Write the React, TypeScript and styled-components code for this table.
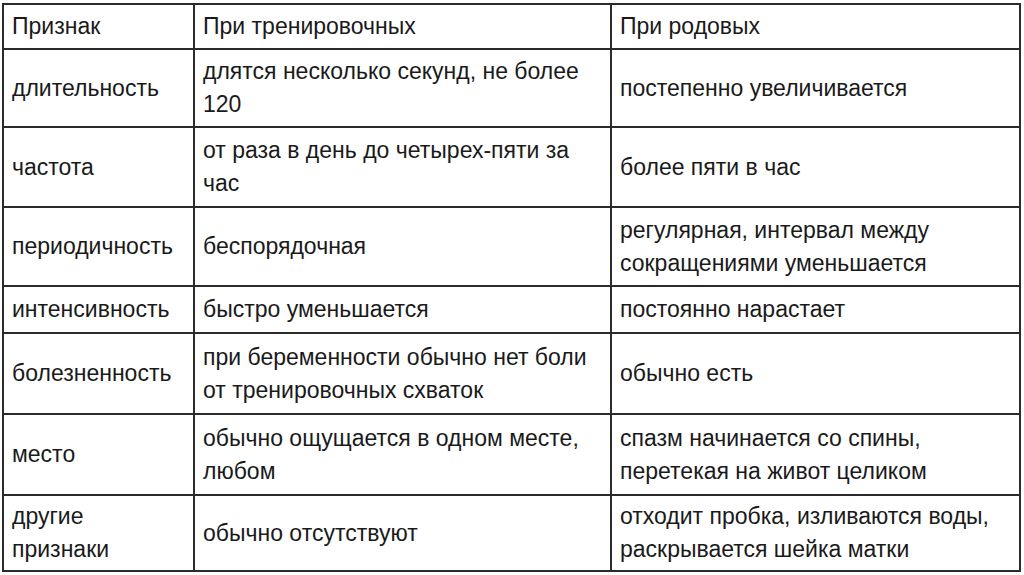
import React from "react";
import styled, { createGlobalStyle } from "styled-components";

const Global = createGlobalStyle`
  html, body {
    margin: 0;
    padding: 0;
    background: #fff;
  }
`;

const Table = styled.div`
  display: grid;
  grid-template-columns: 189px 415px 407px;
  grid-template-rows: 43px 76px 78px 77px 45px 79px 79px 74px;
  gap: 2px;
  padding: 2px;
  margin: 3px 0 0 2px;
  width: fit-content;
  background: #2b2b2b;
  font-family: "Liberation Sans", Arial, sans-serif;
  font-size: 23px;
  line-height: 33px;
  color: #1a1a1a;
`;

const Cell = styled.div`
  background: #fff;
  display: flex;
  align-items: center;
  padding: 0 12px 0 8px;
`;

const rows: [string, string, string][] = [
  ["Признак", "При тренировочных", "При родовых"],
  ["длительность", "длятся несколько секунд, не более 120", "постепенно увеличивается"],
  ["частота", "от раза в день до четырех-пяти за час", "более пяти в час"],
  ["периодичность", "беспорядочная", "регулярная, интервал между сокращениями уменьшается"],
  ["интенсивность", "быстро уменьшается", "постоянно нарастает"],
  ["болезненность", "при беременности обычно нет боли от тренировочных схваток", "обычно есть"],
  ["место", "обычно ощущается в одном месте, любом", "спазм начинается со спины, перетекая на живот целиком"],
  ["другие признаки", "обычно отсутствуют", "отходит пробка, изливаются воды, раскрывается шейка матки"],
];

export default function App() {
  return (
    <>
      <Global />
      <Table>
        {rows.map((r, i) =>
          r.map((t, j) => <Cell key={`${i}-${j}`}>{t}</Cell>)
        )}
      </Table>
    </>
  );
}
